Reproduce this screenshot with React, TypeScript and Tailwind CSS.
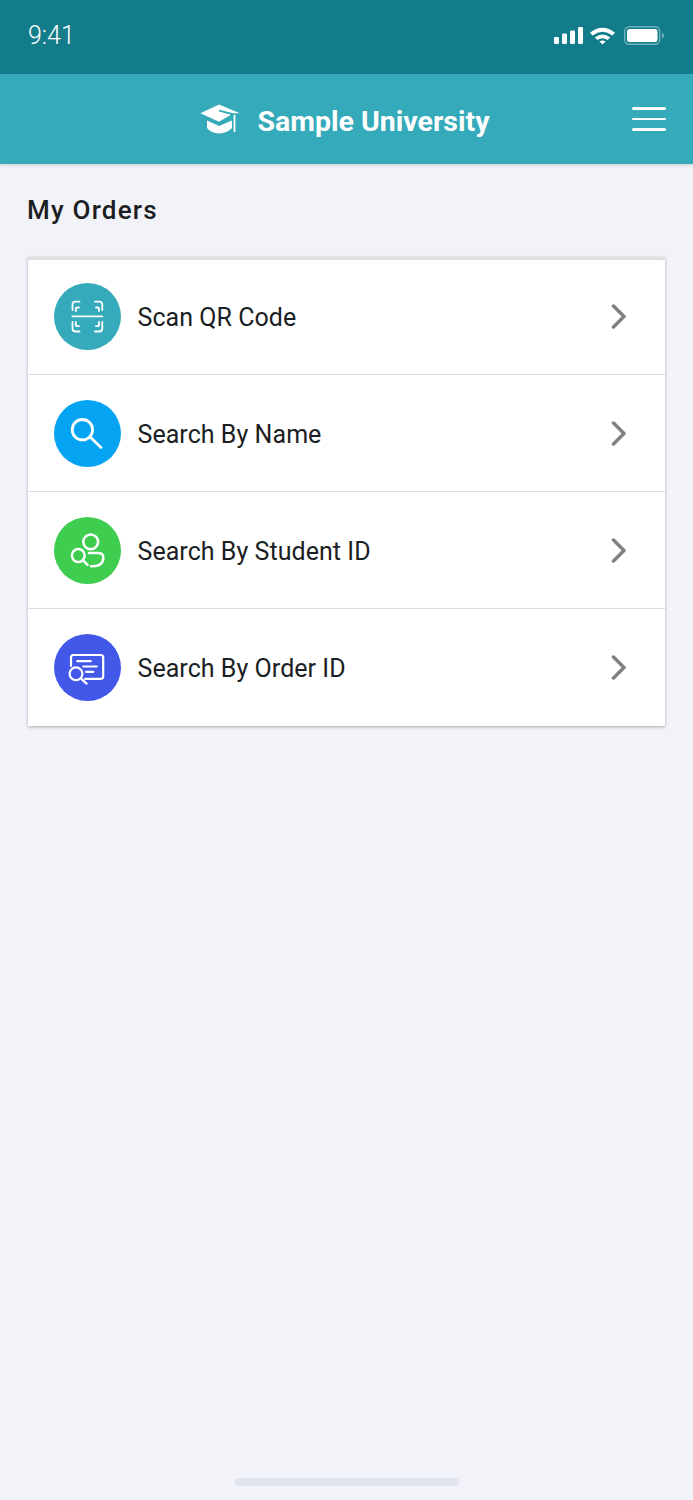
import { ReactNode } from "react"

function CapIcon() {
  return (
    <svg width="41" height="31" viewBox="201 104 41 31" fill="#fff">
      <path d="M220 104.6 L240.8 113.2 L234 113.2 L220.5 109.8 L219.8 111.6 L232 114.8 L220 121.8 L201.4 113.2 Z" />
      <path d="M208 120.6 L220 126 L233 120.6 V128 C230 131.5 225 133.4 220 133.4 C215 133.4 210.5 131.5 208 128 Z" />
      <path d="M234.6 115.2 L236.4 114.4 V132 H234.6 Z" />
    </svg>
  )
}

function ScanIcon() {
  return (
    <svg width="67" height="67" viewBox="0 0 67 67" fill="none" stroke="#fff" strokeWidth="1.8" strokeLinecap="round">
      <path d="M18.5 27V21.5Q18.5 18.7 21.5 18.7H25.5" />
      <path d="M25 24.5H23.5Q21.8 24.5 21.8 26V28" />
      <path d="M41 18.7H45.3Q48.3 18.7 48.3 21.5V27" />
      <path d="M42 24.5H43.5Q45 24.5 45 26V28" />
      <path d="M18.5 39V45.5Q18.5 48.5 21.5 48.5H25.5" />
      <path d="M21.8 39V41.5Q21.8 43.2 23.5 43.2H25" />
      <path d="M48.3 39V45.5Q48.3 48.5 45.3 48.5H41" />
      <path d="M45 39V41.5Q45 43.2 43.5 43.2H42" />
      <path d="M18.3 33.4H48.3" />
    </svg>
  )
}

function SearchIcon() {
  return (
    <svg width="67" height="67" viewBox="0 0 67 67" fill="none" stroke="#fff" strokeWidth="2.8" strokeLinecap="round">
      <circle cx="28.4" cy="29.7" r="10.2" />
      <path d="M36.4 37.2L47 47.4" />
    </svg>
  )
}

function StudentIcon() {
  return (
    <svg width="67" height="67" viewBox="0 0 67 67" fill="none" stroke="#fff" strokeWidth="2.5" strokeLinecap="round">
      <circle cx="36.7" cy="24.8" r="7.4" />
      <circle cx="24.3" cy="38.5" r="6.4" />
      <path d="M29 43.4L33.6 47.8" />
      <path d="M35 36H44Q49.3 36 49.3 40.5Q49.3 49 39 49.3H37" />
    </svg>
  )
}

function OrderIcon() {
  return (
    <svg width="67" height="67" viewBox="0 0 67 67" fill="none" stroke="#fff" strokeWidth="2.2" strokeLinecap="round">
      <path d="M17 32V23.5Q17 21 19.5 21H46.6Q49.2 21 49.2 23.5V42.2Q49.2 44.8 46.6 44.8H31" />
      <path d="M23.3 27.2H36.7" />
      <path d="M29.3 32.5H42.7" />
      <path d="M32 37.8H39.3" />
      <circle cx="22" cy="39.8" r="6.4" />
      <path d="M26.8 44.4L32.6 49.6" />
    </svg>
  )
}

function StatusIcons() {
  return (
    <svg width="112" height="20" viewBox="0 0 112 20" fill="#fff">
      <rect x="1" y="11" width="5" height="7" rx="1.2" />
      <rect x="9" y="7.5" width="5" height="10.5" rx="1.2" />
      <rect x="17" y="4.5" width="5" height="13.5" rx="1.2" />
      <rect x="25" y="1" width="5" height="17" rx="1.2" />
      <path d="M37 6.8Q49.5 -3.4 62 6.8L59.4 9.4Q49.5 2 39.6 9.4Z" />
      <path d="M41.8 11.4Q49.5 5.4 57.2 11.4L54.6 14Q49.5 10.4 44.4 14Z" />
      <path d="M46.4 15.6Q49.5 13.4 52.6 15.6L49.5 18.6Z" />
      <rect x="71.7" y="0.7" width="35" height="17.6" rx="4.5" fill="none" stroke="#fff" strokeOpacity="0.4" strokeWidth="1.4" />
      <rect x="74" y="3" width="30.5" height="13" rx="2.5" />
      <path d="M109 6.5Q111 7.5 111 9.5Q111 11.5 109 12.5Z" fillOpacity="0.4" />
    </svg>
  )
}

function Row({ icon, color, label, last, first }: { icon: ReactNode; color: string; label: string; last?: boolean; first?: boolean }) {
  return (
    <div className={`flex items-center pl-[26px] pr-[38px] ${first ? "h-[115px] pb-[2px]" : "h-[117px]"} ${last ? "" : "border-b border-[#dcdde0]"}`}>
      <div className={`w-[67px] h-[67px] rounded-full shrink-0 ${color}`}>{icon}</div>
      <span className="ml-[16.5px] pt-[2px] flex-1 text-[25px] leading-none tracking-[0.05px] text-[#1b1e22]">{label}</span>
      <svg width="16" height="25" viewBox="0 0 16 25" fill="none" stroke="#808080" strokeWidth="3.5" strokeLinecap="round" strokeLinejoin="round">
        <path d="M2.5 2L13 12.5L2.5 23" />
      </svg>
    </div>
  )
}

export default function App() {
  return (
    <div className="min-h-screen flex flex-col bg-[#f2f3f8] font-['Roboto',sans-serif]">
      <div className="h-[74px] bg-[#127c8a] flex items-center justify-between px-[28px] pb-[4px]">
        <span className="text-[25px] font-light text-white leading-none">9:41</span>
        <div className="w-[112px] pt-[2px]">
          <StatusIcons />
        </div>
      </div>

      <div className="h-[90px] bg-[#34aaba] grid grid-cols-[1fr_auto_1fr] items-center shadow-[0_1px_3px_rgba(0,0,0,0.18)]">
        <div />
        <div className="flex items-center gap-[16px] pr-[3px]">
          <CapIcon />
          <span className="pt-[7px] text-[28.5px] font-bold leading-none text-white">Sample University</span>
        </div>
        <div className="flex justify-end pr-[27px]">
          <div className="w-[34px] flex flex-col gap-[8px]">
            <div className="h-[2.5px] bg-white rounded-full" />
            <div className="h-[2.5px] bg-white rounded-full" />
            <div className="h-[2.5px] bg-white rounded-full" />
          </div>
        </div>
      </div>

      <h1 className="mt-[32px] ml-[27px] text-[26px] font-medium leading-[28px] tracking-[1.2px] text-[#1b1e22]">My Orders</h1>

      <div className="mt-[33px] mx-[28px] bg-white border-t-[3px] border-[#dfe0e1] shadow-[0_1px_3px_rgba(0,0,0,0.3)]">
        <Row first icon={<ScanIcon />} color="bg-[#34aaba]" label="Scan QR Code" />
        <Row icon={<SearchIcon />} color="bg-[#04a4f2]" label="Search By Name" />
        <Row icon={<StudentIcon />} color="bg-[#3ecd4f]" label="Search By Student ID" />
        <Row last icon={<OrderIcon />} color="bg-[#4158e8]" label="Search By Order ID" />
      </div>

      <div className="mt-auto mb-[14px] mx-auto w-[224px] h-[8px] rounded-full bg-[#e1e3f0]" />
    </div>
  )
}
